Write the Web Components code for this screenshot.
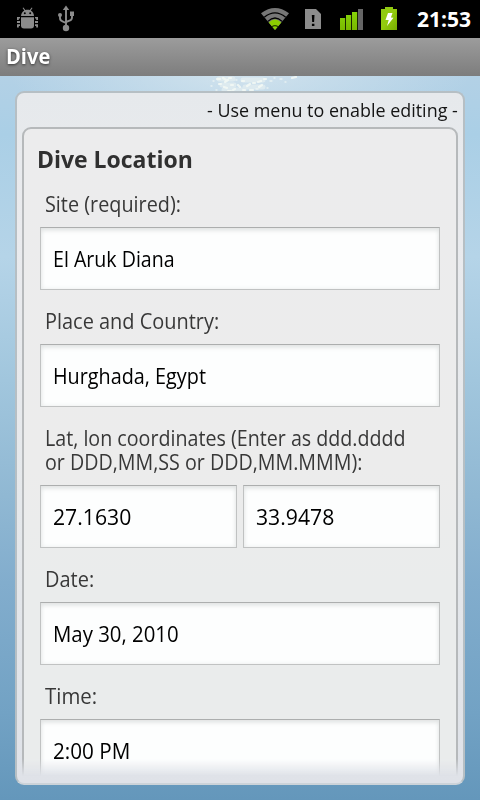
<!DOCTYPE html>
<html lang="en">
<head>
<meta charset="utf-8">
<title>Dive</title>
<style>
    body {
        margin: 0;
        font-family: "Open Sans", "Noto Sans", sans-serif;
        overflow: hidden;
    }
</style>
</head>
<body>

<template id="fit-text-template">
    <style>
        :host {
            display: block;
            white-space: nowrap;
        }

        span {
            display: inline-block;
            transform-origin: 0 50%;
            vertical-align: top;
        }
    </style>
    <span><slot></slot></span>
</template>

<template id="status-bar-template">
    <style>
        :host {
            display: flex;
            align-items: center;
            height: 38px;
            flex: none;
            box-sizing: border-box;
            padding: 0 9px 0 15px;
            background: #000;
            color: #fff;
        }

        svg {
            display: block;
            flex: none;
        }

        .bug { margin-top: -2px; }
        .usb { margin: -2px 0 0 16px; }
        .wifi { margin-left: auto; }
        .sim { margin-left: 14px; }
        .signal { margin-left: 17px; }
        .battery { margin: -1px 0 0 16px; }

        fit-text {
            margin-left: 19px;
            font-size: 21px;
            font-weight: 700;
            line-height: 38px;
        }
    </style>
    <svg class="bug" width="25" height="24" viewBox="0 0 25 24" fill="#8c8c8c">
        <path d="M6 10C6.200 7.300 7.400 5.500 9.300 4.400L7.600 2l.8-.5 1.900 2.500c1.500-.5 3-.5 4.500 0L16.700 1.500l.8.500-1.700 2.400C17.700 5.500 18.900 7.300 19 10z"/>
        <path d="M6 11.200h13v8.300q0 3-3 3H9q-3 0-3-3z"/>
        <path d="M2 11h3v1.500H3.800v1.400H2zM2 15h3v2H2zM2 21.500v-3.200h3v1.700H3.800v1.500zM23 11h-3v1.500h1.200v1.400H23zM23 15h-3v2h3zM23 21.500v-3.200h-3v1.700h1.200v1.500z"/>
        <circle cx="9.800" cy="7.300" r="1" fill="#000"/>
        <circle cx="15.200" cy="7.300" r="1" fill="#000"/>
    </svg>
    <svg class="usb" width="20" height="28" viewBox="0 0 20 28" fill="#8c8c8c">
        <path d="M10 1.500l3.200 4.500H6.800z"/>
        <circle cx="10" cy="24" r="3.200"/>
        <path d="M10 5v18M4 11v3q0 2.500 2.500 3.400L10 19M16 10.500v3q0 2.300-2.500 3.200L10 18" fill="none" stroke="#8c8c8c" stroke-width="1.900"/>
        <circle cx="4" cy="11" r="2"/>
        <path d="M14 7.500h4v4.500h-4z"/>
    </svg>
    <svg class="wifi" width="30" height="24" viewBox="0 0 30 24">
        <path d="M1 6.200Q15-4.200 29 6.200L15 23z" fill="#777"/>
        <path d="M4.300 10.200Q15 1.500 25.700 10.200M7.900 14.400Q15 7.600 22.100 14.400" fill="none" stroke="#000" stroke-width="1.300"/>
        <path d="M8.700 15.400Q15 9.700 21.300 15.400L15 23z" fill="#8bcc00"/>
        <path d="M12 19.700Q15 17.500 18 19.700" fill="none" stroke="#264000" stroke-width="1.100"/>
    </svg>
    <svg class="sim" width="18" height="22" viewBox="0 0 18 22">
        <path d="M1 1h11l5 5v15H1z" fill="#8c8c8c"/>
        <path d="M7.800 7h2.700l-.4 7H8.200zM7.900 15.700h2.500V18H7.900z" fill="#000"/>
    </svg>
    <svg class="signal" width="25" height="24" viewBox="0 0 25 24">
        <defs>
            <linearGradient id="bar" x1="0" y1="0" x2="0" y2="1">
                <stop offset="0" stop-color="#86d408"/>
                <stop offset="1" stop-color="#7ab800"/>
            </linearGradient>
        </defs>
        <path d="M1 11h5.200v12H1zM7 8h5.200v15H7zM13 5h5.200v18H13z" fill="url(#bar)"/>
        <path d="M19 2h5v21h-5z" fill="#666"/>
    </svg>
    <svg class="battery" width="18" height="25" viewBox="0 0 18 25">
        <defs>
            <linearGradient id="cell" x1="0" y1="0" x2="1" y2="1">
                <stop offset="0" stop-color="#8fc915"/>
                <stop offset=".5" stop-color="#93cb0e"/>
                <stop offset="1" stop-color="#76ad00"/>
            </linearGradient>
        </defs>
        <path d="M1 3h4V1h8v2h4v21H1z" fill="url(#cell)"/>
        <path d="M8 7h4.500l-1.600 4.500 2.600.2L7 20l1.700-6H5.500z" fill="#fff"/>
    </svg>
    <fit-text width="54">21:53</fit-text>
</template>

<template id="title-bar-template">
    <style>
        :host {
            display: block;
            flex: none;
            height: 38px;
            box-sizing: border-box;
            padding-left: 6px;
            background: linear-gradient(#9c9c9c, #7d7d7d);
            color: #fff;
            font-size: 21px;
            font-weight: 700;
            line-height: 36px;
            text-shadow: 0 1px 3px #333;
        }
    </style>
    <slot></slot>
</template>

<template id="water-backdrop-template">
    <style>
        :host {
            display: grid;
            flex: 1;
            min-height: 0;
            background:
                radial-gradient(ellipse 230px 60px at 50% 0, rgba(220, 233, 240, .7), rgba(220, 233, 240, 0)),
                linear-gradient(#b3d1e6 0, #aacfe6 8%, #b5d4e8 25%, #a1c6dd 42%, #90b8d3 58%, #82adcd 70%, #72a2c4 88%, #6497bb 100%);
        }

        svg, .content {
            grid-area: 1 / 1;
            min-height: 0;
        }

        .content {
            display: flex;
            flex-direction: column;
            padding: 15px;
        }
    </style>
    <svg width="480" height="17" viewBox="0 0 480 17" fill="none" stroke="#f3f9f5" stroke-linecap="round">
        <g stroke-width="5" opacity=".45">
            <path d="M219 3h14M222 9h12M243 4h20M245 11h18M224 14h20"/>
        </g>
        <g stroke-width="2.200" opacity=".85">
            <path d="M217 3h3M223 2l3 2M229 2h2M219 8h2M225 6l3-2M224 11l3 1M231 9h2M235 13l-2 1M228 15h3M238 9l2 2M242 5h2M247 10l3-2M253 7h2M258 6l3-1M262 9l-3 2M250 14h3M264 3h2M243 14h2M292 2l4-1"/>
        </g>
        <g stroke-width="1.300" opacity=".7">
            <path d="M213 5h1M211 10h1M236 4h1M270 5h2M274 2h1M267 12h1M280 3h2M216 14h1M256 13h2M285 6h1"/>
        </g>
    </svg>
    <div class="content"><slot></slot></div>
</template>

<template id="dive-panel-template">
    <style>
        :host {
            display: flex;
            flex-direction: column;
            flex: 1;
            min-height: 0;
            box-sizing: border-box;
            border: 2px solid #b6bfc4;
            border-bottom-color: #ccd3d9;
            border-radius: 9px;
            padding: 0 5px 7px;
            background: linear-gradient(#e6e9ec, #eaebee 20%, #e5e8eb 60%, #dfe2e8);
        }

        .hint {
            display: flex;
            justify-content: flex-end;
            height: 34px;
            font-size: 19px;
            line-height: 35px;
            color: #141414;
        }

        .scroller {
            flex: 1;
            min-height: 0;
            overflow: hidden;
            -webkit-mask-image: linear-gradient(#000 calc(100% - 17px), transparent);
            mask-image: linear-gradient(#000 calc(100% - 17px), transparent);
        }

        .sheet {
            box-sizing: border-box;
            min-height: 760px;
            border: 2px solid #b6b9bb;
            border-radius: 9px;
            padding: 13px 16px 0;
            background: linear-gradient(#ececed, #ececec 45%, #eaecec 60%, #eaecec);
        }
    </style>
    <div class="hint"><slot name="hint"></slot></div>
    <div class="scroller">
        <div class="sheet"><slot></slot></div>
    </div>
</template>

<template id="section-title-template">
    <style>
        :host {
            display: block;
            height: 32px;
            margin-left: -3px;
            font-size: 24px;
            font-weight: 700;
            line-height: 34px;
            color: #303030;
        }
    </style>
    <slot></slot>
</template>

<template id="form-field-template">
    <style>
        :host {
            display: block;
            margin-top: 18px;
        }

        :host([first]) {
            margin-top: 17px;
        }

        .label {
            padding: 0 0 12px 5px;
            font-size: 22px;
            line-height: 24px;
            color: #383838;
        }

        .inputs {
            display: flex;
            gap: 6px;
        }
    </style>
    <div class="label"><slot name="label"></slot></div>
    <div class="inputs"><slot></slot></div>
</template>

<template id="text-box-template">
    <style>
        :host {
            display: block;
            flex: 1;
            box-sizing: border-box;
            height: 63px;
            padding-left: 12px;
            border: 1px solid #c0c2c2;
            border-top-color: #acaeae;
            background: #fdfefe;
            box-shadow: inset 0 3px 5px -1px #dfe1e1, inset 0 0 5px #ecefef;
            font-size: 22px;
            line-height: 60px;
            color: #000;
        }
    </style>
    <slot></slot>
</template>

<template id="dive-app-template">
    <style>
        :host {
            display: flex;
            flex-direction: column;
            width: 480px;
            height: 800px;
            overflow: hidden;
        }
    </style>
    <status-bar></status-bar>
    <title-bar><fit-text width="44">Dive</fit-text></title-bar>
    <water-backdrop>
        <dive-panel>
            <fit-text slot="hint" width="251">- Use menu to enable editing -</fit-text>
            <section-title><fit-text width="156">Dive Location</fit-text></section-title>
            <form-field first>
                <fit-text slot="label" width="136">Site (required):</fit-text>
                <text-box><fit-text width="122">El Aruk Diana</fit-text></text-box>
            </form-field>
            <form-field>
                <fit-text slot="label" width="174">Place and Country:</fit-text>
                <text-box><fit-text width="153">Hurghada, Egypt</fit-text></text-box>
            </form-field>
            <form-field>
                <fit-text slot="label" width="361">Lat, lon coordinates (Enter as ddd.dddd<br>or DDD,MM,SS or DDD,MM.MMM):</fit-text>
                <text-box><fit-text width="78">27.1630</fit-text></text-box>
                <text-box><fit-text width="78">33.9478</fit-text></text-box>
            </form-field>
            <form-field>
                <fit-text slot="label" width="49">Date:</fit-text>
                <text-box><fit-text width="126">May 30, 2010</fit-text></text-box>
            </form-field>
            <form-field>
                <fit-text slot="label" width="52">Time:</fit-text>
                <text-box><fit-text width="77">2:00 PM</fit-text></text-box>
            </form-field>
        </dive-panel>
    </water-backdrop>
</template>

<dive-app></dive-app>

<script>
    (() => {

        class TemplateElement extends HTMLElement {
            constructor() {
                super();

                const template = document.getElementById(this.localName + "-template");
                this._shadowRoot = this.attachShadow({ mode: "open" });
                this._shadowRoot.appendChild(template.content.cloneNode(true));
            }
        }

        // Condenses its text to the given width, measured on the longest line
        class FitText extends TemplateElement {
            connectedCallback() {
                this.fit();
                document.fonts.ready.then(() => this.fit());
            }

            fit() {
                const width = Number(this.getAttribute("width"));
                const span = this._shadowRoot.querySelector("span");
                this.style.width = width + "px";
                if (span.offsetWidth) {
                    span.style.transform = `scaleX(${width / span.offsetWidth})`;
                }
            }
        }

        customElements.define("fit-text", FitText);
        customElements.define("status-bar", class extends TemplateElement {});
        customElements.define("title-bar", class extends TemplateElement {});
        customElements.define("water-backdrop", class extends TemplateElement {});
        customElements.define("dive-panel", class extends TemplateElement {});
        customElements.define("section-title", class extends TemplateElement {});
        customElements.define("form-field", class extends TemplateElement {});
        customElements.define("text-box", class extends TemplateElement {});
        customElements.define("dive-app", class extends TemplateElement {});
    })();
</script>
</body>
</html>
